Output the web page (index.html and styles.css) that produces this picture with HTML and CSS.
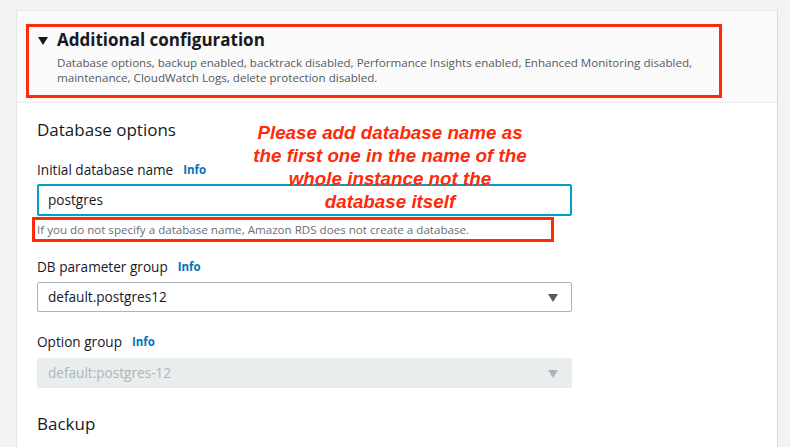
FILE: index.html
```html
<!DOCTYPE html>
<html>
<head>
<meta charset="utf-8">
<link rel="stylesheet" href="styles.css">
</head>
<body>
<div class="panel">
  <div class="panel-header">
    <div class="mark-box header-box">
      <div class="title-row">
        <span class="caret"></span>
        <h2 class="title">Additional configuration</h2>
      </div>
      <p class="summary">Database options, backup enabled, backtrack disabled, Performance Insights enabled, Enhanced Monitoring disabled, maintenance, CloudWatch Logs, delete protection disabled.</p>
    </div>
  </div>
  <div class="panel-body">
    <h3 class="section-title">Database options</h3>
    <div class="field field-name">
      <div class="label">Initial database name <span class="info">Info</span></div>
      <div class="input focused">postgres</div>
      <div class="mark-box hint-box">If you do not specify a database name, Amazon RDS does not create a database.</div>
    </div>
    <div class="field field-param">
      <div class="label">DB parameter group <span class="info">Info</span></div>
      <div class="input select">default.postgres12<span class="arrow"></span></div>
    </div>
    <div class="field field-option">
      <div class="label">Option group <span class="info">Info</span></div>
      <div class="input select disabled">default:postgres-12<span class="arrow"></span></div>
    </div>
    <h3 class="section-title backup">Backup</h3>
    <div class="annotation">Please add database name as<br>the first one in the name of the<br>whole instance not the<br>database itself</div>
  </div>
</div>
</body>
</html>
```

FILE: styles.css
```css
html, body {
  margin: 0;
  padding: 0;
}
body {
  background: #f2f3f3;
  font-family: "Open Sans", "Noto Sans", Arial, sans-serif;
  color: #16191f;
  padding: 10px 12px 0 16px;
  height: 437px;
  overflow: hidden;
}
.panel {
  background: #fff;
  height: 100%;
  border-left: 1px solid #e3e6e6;
  border-top: 1px solid #e8eaea;
  border-right: 1px solid #d5dbdb;
  box-sizing: border-box;
  position: relative;
}
.panel-header {
  background: #fafafa;
  border-bottom: 1px solid #eaeded;
  height: 92px;
  box-sizing: border-box;
  padding: 13px 0 0 9px;
}
.mark-box {
  border: 3px solid #fe2a0a;
  box-sizing: border-box;
}
.header-box {
  width: 696px;
  height: 74px;
  padding: 2px 0 0 9px;
}
.title-row {
  display: flex;
  align-items: center;
  gap: 9px;
}
.caret {
  width: 0;
  height: 0;
  border-left: 5px solid transparent;
  border-right: 5px solid transparent;
  border-top: 8px solid #16191f;
  margin-top: 1px;
}
.title {
  margin: 0;
  font-size: 17px;
  font-weight: 700;
  line-height: 22px;
}
.summary {
  margin: 4px 0 0 19px;
  font-size: 11.6px;
  line-height: 15px;
  color: #545b64;
}
.panel-body {
  padding: 16px 0 0 20px;
  position: relative;
}
.section-title {
  margin: 0;
  font-size: 17px;
  font-weight: 400;
  line-height: 22px;
}
.label {
  font-size: 13.6px;
  line-height: 20px;
  display: flex;
  align-items: center;
  gap: 10px;
}
.info {
  color: #0073bb;
  font-weight: 700;
  font-size: 11.5px;
}
.field-name {
  margin-top: 19px;
}
.field-param {
  margin-top: 15px;
}
.field-option {
  margin-top: 20px;
}
.input {
  margin-top: 5px;
  width: 535px;
  height: 30px;
  box-sizing: border-box;
  border: 1px solid #aab7b8;
  border-radius: 2px;
  font-size: 13.6px;
  line-height: 28px;
  padding-left: 10px;
  position: relative;
}
.field-option .input {
  margin-top: 6px;
}
.input.focused {
  margin-top: 4px;
  border: 2px solid #00a1c9;
  height: 32px;
  line-height: 28px;
  padding-left: 9px;
}
.select .arrow {
  position: absolute;
  right: 13px;
  top: 11px;
  width: 0;
  height: 0;
  border-left: 5px solid transparent;
  border-right: 5px solid transparent;
  border-top: 8px solid #545b64;
}
.input.disabled {
  background: #eaeded;
  border-color: #eaeded;
  color: #aab7b8;
}
.disabled .arrow {
  border-top-color: #aab7b8;
}
.hint-box {
  margin-left: -5px;
  width: 522px;
  height: 25px;
  font-size: 11.6px;
  line-height: 19px;
  padding-left: 2px;
  color: #687078;
  margin-top: 1px;
  white-space: nowrap;
}
.backup {
  margin-top: 25px;
}
.annotation {
  position: absolute;
  left: 213px;
  top: 18px;
  width: 320px;
  text-align: center;
  font-family: "Liberation Sans", Arial, sans-serif;
  font-style: italic;
  font-weight: 700;
  font-size: 18.8px;
  line-height: 23px;
  color: #fe2a0a;
}
```
